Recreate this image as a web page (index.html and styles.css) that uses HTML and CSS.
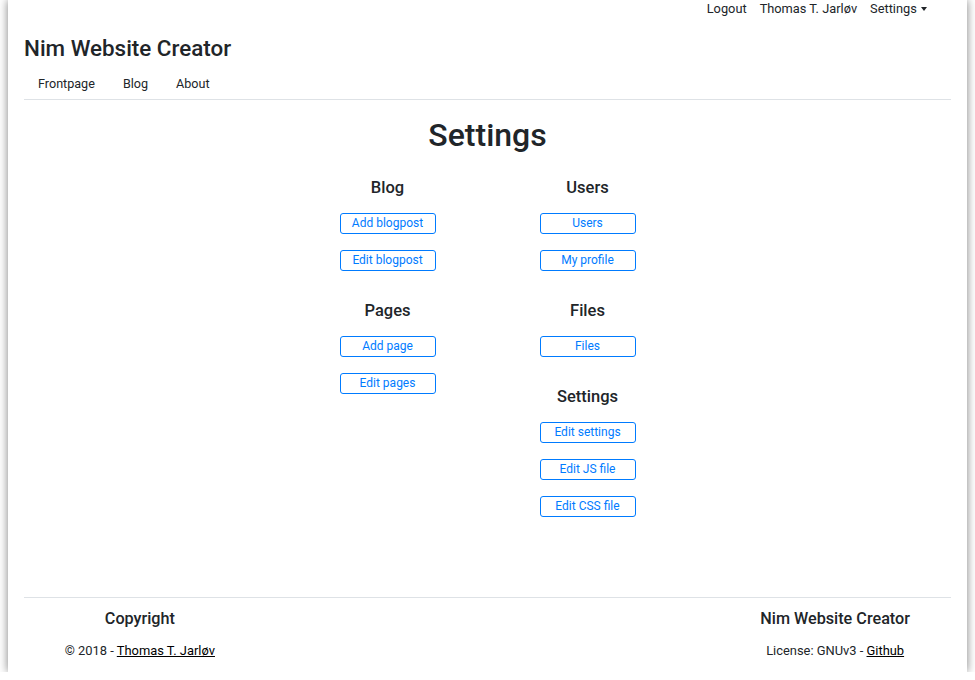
FILE: index.html
```html
<!DOCTYPE html>
<html>
<head>
<meta charset="utf-8">
<link rel="stylesheet" href="styles.css">
</head>
<body>
<div class="page">
  <div class="topbar">
    <a class="toplink">Logout</a>
    <a class="toplink">Thomas T. Jarløv</a>
    <a class="toplink">Settings <span class="caret"></span></a>
  </div>
  <div class="brand">Nim Website Creator</div>
  <nav class="mainnav">
    <a>Frontpage</a>
    <a>Blog</a>
    <a>About</a>
  </nav>
  <main class="content">
    <h1 class="title">Settings</h1>
    <div class="grid">
      <div class="col">
        <section class="group">
          <h3>Blog</h3>
          <a class="btn">Add blogpost</a>
          <a class="btn">Edit blogpost</a>
        </section>
        <section class="group">
          <h3>Pages</h3>
          <a class="btn">Add page</a>
          <a class="btn">Edit pages</a>
        </section>
      </div>
      <div class="col">
        <section class="group">
          <h3>Users</h3>
          <a class="btn">Users</a>
          <a class="btn">My profile</a>
        </section>
        <section class="group">
          <h3>Files</h3>
          <a class="btn">Files</a>
        </section>
        <section class="group">
          <h3>Settings</h3>
          <a class="btn">Edit settings</a>
          <a class="btn">Edit JS file</a>
          <a class="btn">Edit CSS file</a>
        </section>
      </div>
    </div>
  </main>
  <footer class="footer">
    <div class="fcol">
      <h4>Copyright</h4>
      <p>© 2018 - <a>Thomas T. Jarløv</a></p>
    </div>
    <div class="fcol"></div>
    <div class="fcol"></div>
    <div class="fcol">
      <h4>Nim Website Creator</h4>
      <p>License: GNUv3 - <a>Github</a></p>
    </div>
  </footer>
</div>
</body>
</html>
```

FILE: styles.css
```css
html, body {
  margin: 0;
  padding: 0;
  background: #fff;
}
body {
  font-family: Roboto, "Liberation Sans", sans-serif;
  color: #212529;
  font-size: 13px;
}
.page {
  margin: 0 8px;
  height: 672px;
  box-sizing: border-box;
  padding: 0 16px;
  background: #fff;
  box-shadow: 0 0 9px rgba(0, 0, 0, 0.5);
  display: flex;
  flex-direction: column;
}
.topbar {
  display: flex;
  justify-content: flex-end;
  gap: 13px;
  padding-right: 24px;
  height: 17px;
  line-height: 17px;
}
.toplink {
  color: #212529;
  font-size: 12.8px;
}
.caret {
  display: inline-block;
  width: 0;
  height: 0;
  border-left: 3.5px solid transparent;
  border-right: 3.5px solid transparent;
  border-top: 4px solid #212529;
  vertical-align: 2px;
  margin-left: 1px;
}
.brand {
  font-size: 22.4px;
  font-weight: 500;
  margin-top: 17px;
  line-height: 28px;
}
.mainnav {
  display: flex;
  padding: 14px 0 7px;
  border-bottom: 1px solid #dee2e6;
}
.mainnav a {
  padding: 0 14px;
  line-height: 16px;
  font-size: 12.6px;
  color: #212529;
}
.content {
  flex: 1;
}
.title {
  text-align: center;
  font-size: 32px;
  font-weight: 500;
  margin: 15px 0 0;
  line-height: 40px;
}
.grid {
  display: grid;
  grid-template-columns: 200px 200px;
  justify-content: center;
  margin-top: 23px;
}
.col {
  display: flex;
  flex-direction: column;
  align-items: center;
}
.group {
  display: flex;
  flex-direction: column;
  align-items: center;
  margin-bottom: 14px;
}
.group h3 {
  font-size: 16.5px;
  font-weight: 500;
  margin: 0 0 15px;
  line-height: 20px;
}
.btn {
  display: block;
  box-sizing: border-box;
  width: 96px;
  height: 21px;
  line-height: 19px;
  border: 1px solid #007bff;
  border-radius: 3px;
  color: #007bff;
  text-align: center;
  font-size: 12px;
  margin-bottom: 16px;
}
.footer {
  box-sizing: border-box;
  display: grid;
  grid-template-columns: repeat(4, 1fr);
  align-content: start;
  border-top: 1px solid #dee2e6;
  padding-top: 11px;
  height: 75px;
}
.fcol {
  text-align: center;
}
.fcol h4 {
  font-size: 16.2px;
  font-weight: 500;
  margin: 0;
  line-height: 20px;
}
.fcol p {
  margin: 14px 0 0;
  font-size: 12.9px;
  line-height: 15px;
}
.fcol a {
  color: #000;
  text-decoration: underline;
}
```
